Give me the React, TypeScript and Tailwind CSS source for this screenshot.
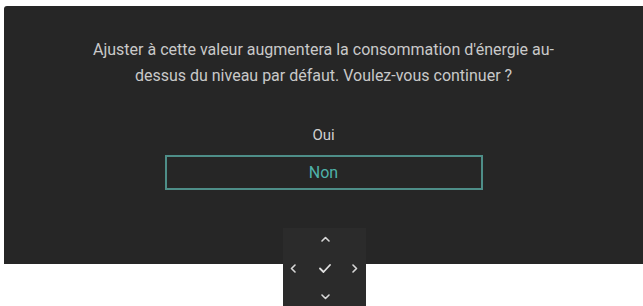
import React from "react";

export default function App() {
  return (
    <div className="relative w-[643px] h-[306px] bg-white overflow-hidden" style={{ fontFamily: "Roboto, 'Liberation Sans', sans-serif" }}>
      <div className="ml-[4px] mt-[6px] h-[258px] bg-[#262626] rounded-tl-[3px] flex flex-col items-center">
        <p className="mt-[31px] text-[16px] leading-[26px] text-[#c9c9c9] text-center whitespace-nowrap">
          Ajuster à cette valeur augmentera la consommation d'énergie au-
          <br />
          dessus du niveau par défaut. Voulez-vous continuer ?
        </p>
        <div className="mt-[38px] text-[15px] leading-[16px] text-[#d0d0d0]">Oui</div>
        <div className="mt-[12px] w-[318px] h-[35px] border-2 border-[#4e8e88] flex items-center justify-center text-[16px] text-[#4fb2aa]">
          Non
        </div>
      </div>
      <div className="absolute left-[283px] top-[228px] w-[83px] h-[78px] bg-[#2b2b2b] grid grid-cols-[20px_44px_16px] grid-rows-[22px_36px_22px]">
        <div />
        <div className="flex items-center justify-center">
          <svg width="9" height="6" viewBox="0 0 9 6" fill="none" stroke="#d8d8d8" strokeWidth="1.6" strokeLinecap="round" strokeLinejoin="round"><path d="M1 5 L4.5 1.5 L8 5" /></svg>
        </div>
        <div />
        <div className="flex items-center justify-center">
          <svg width="6" height="9" viewBox="0 0 6 9" fill="none" stroke="#d8d8d8" strokeWidth="1.6" strokeLinecap="round" strokeLinejoin="round"><path d="M5 1 L1.5 4.5 L5 8" /></svg>
        </div>
        <div className="flex items-center justify-center">
          <svg width="12" height="9" viewBox="0 0 12 9" fill="none" stroke="#e0e0e0" strokeWidth="1.8" strokeLinecap="round" strokeLinejoin="round"><path d="M1 4.5 L4.5 8 L11 1" /></svg>
        </div>
        <div className="flex items-center justify-center">
          <svg width="6" height="9" viewBox="0 0 6 9" fill="none" stroke="#d8d8d8" strokeWidth="1.6" strokeLinecap="round" strokeLinejoin="round"><path d="M1 1 L4.5 4.5 L1 8" /></svg>
        </div>
        <div />
        <div className="flex items-center justify-center">
          <svg width="9" height="6" viewBox="0 0 9 6" fill="none" stroke="#d8d8d8" strokeWidth="1.6" strokeLinecap="round" strokeLinejoin="round"><path d="M1 1 L4.5 4.5 L8 1" /></svg>
        </div>
        <div />
      </div>
    </div>
  );
}
